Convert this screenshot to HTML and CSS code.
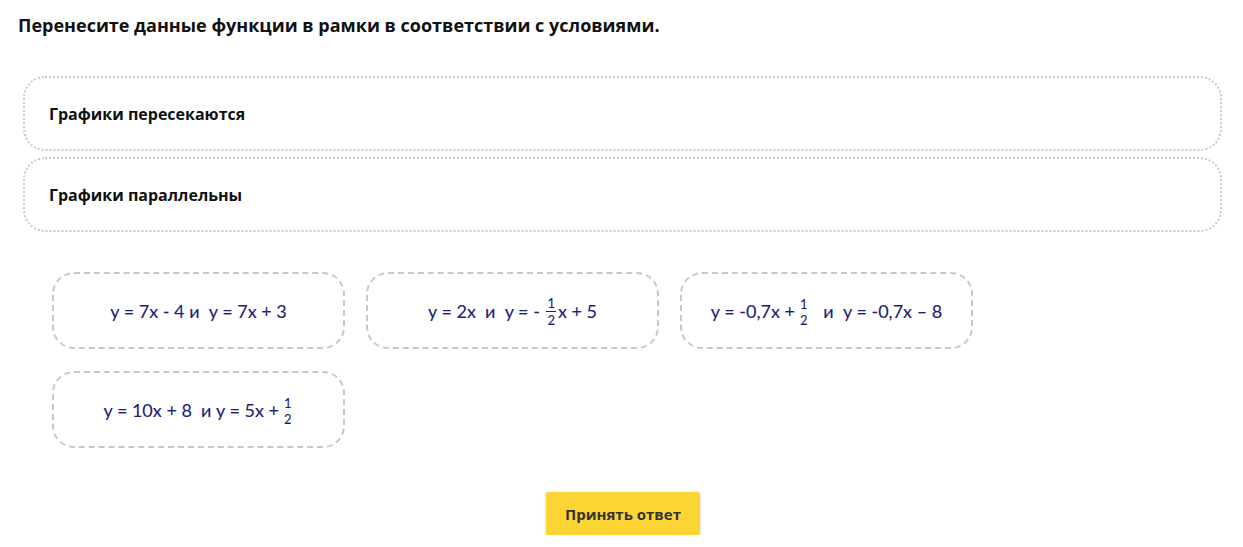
FILE: index.html
```html
<!DOCTYPE html>
<html lang="ru">
<head>
<meta charset="utf-8">
<title>Задание</title>
<link rel="stylesheet" href="styles.css">
</head>
<body>
<h1 class="task-title">Перенесите данные функции в рамки в соответствии с условиями.</h1>
<div class="zones">
  <div class="zone"><span class="zone-label">Графики пересекаются</span></div>
  <div class="zone"><span class="zone-label">Графики параллельны</span></div>
</div>
<div class="cards">
  <div class="card"><span class="formula">y = 7x - 4 и&nbsp; y = 7x + 3</span></div>
  <div class="card"><span class="formula">y = 2x&nbsp; и&nbsp; y = -&nbsp;<span class="frac barred"><span class="num">1</span><span class="den">2</span></span>x + 5</span></div>
  <div class="card"><span class="formula">y = -0,7x +<span class="frac spaced"><span class="num">1</span><span class="den">2</span></span>&nbsp;&nbsp; и&nbsp; y = -0,7x – 8</span></div>
  <div class="card"><span class="formula">y = 10x + 8&nbsp; и y = 5x +<span class="frac spaced"><span class="num">1</span><span class="den">2</span></span></span></div>
</div>
<div class="actions">
  <button class="submit" type="button">Принять ответ</button>
</div>
</body>
</html>
```
FILE: styles.css
```css
* { box-sizing: border-box; }
body {
  margin: 0;
  background: #fff;
  font-family: "Open Sans", "Liberation Sans", sans-serif;
  color: #111;
}
.task-title {
  margin: 0;
  padding: 12px 0 0 18px;
  font-size: 18px;
  line-height: 26px;
  font-weight: 700;
  color: #111;
}
.zones {
  display: flex;
  flex-direction: column;
  gap: 6px;
  padding: 38px 21px 0 23px;
}
.zone {
  height: 75px;
  border: 2px dotted #c9c9c9;
  border-radius: 22px;
  display: flex;
  align-items: center;
  padding-left: 24px;
}
.zone-label {
  font-size: 16px;
  font-weight: 700;
  color: #111;
}
.cards {
  display: grid;
  grid-template-columns: repeat(3, 293px);
  column-gap: 21px;
  row-gap: 22px;
  padding: 40px 0 0 52px;
}
.card {
  height: 77px;
  border: 2px dashed #c8c8c8;
  border-radius: 22px;
  display: flex;
  align-items: center;
  justify-content: center;
}
.formula {
  font-family: "Lato", "Liberation Sans", sans-serif;
  font-size: 18px;
  font-weight: 400;
  color: #1d1d7a;
  white-space: nowrap;
  display: inline-flex;
  align-items: center;
  -webkit-text-stroke: 0.12px #1d1d7a;
}
.frac {
  display: inline-flex;
  flex-direction: column;
  align-items: center;
  font-size: 13px;
  line-height: 12px;
  margin: 0 2px;
  position: relative;
  top: 1px;
}
.frac.spaced { margin-left: 5px; }
.frac .num { padding-bottom: 2px; }
.frac .den { padding-top: 2px; }
.frac.barred .num { border-bottom: 1px solid #1d1d7a; padding: 0 1px 2px; }
.actions {
  display: flex;
  justify-content: center;
  padding: 44px 0 0 3px;
}
.submit {
  width: 154px;
  height: 43px;
  border: none;
  border-radius: 2px;
  background: #fcd535;
  box-shadow: 0 1px 3px rgba(0,0,0,0.22);
  font-family: "Open Sans", "Liberation Sans", sans-serif;
  font-size: 15px;
  font-weight: 700;
  color: #333;
  cursor: pointer;
}
```
